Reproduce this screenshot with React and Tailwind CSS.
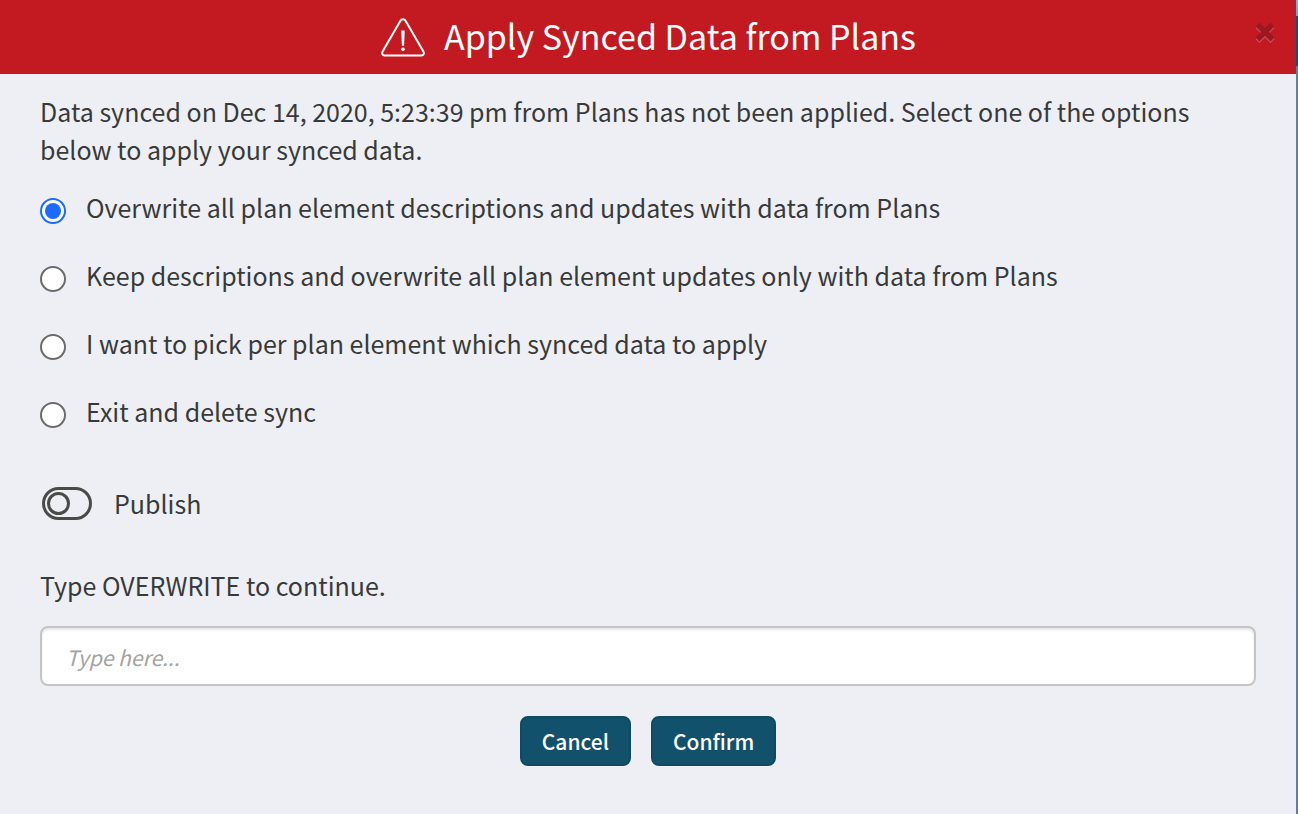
import { useState } from "react";

const OPTIONS = [
    { id: "overwrite-all", label: "Overwrite all plan element descriptions and updates with data from Plans" },
    { id: "overwrite-updates", label: "Keep descriptions and overwrite all plan element updates only with data from Plans" },
    { id: "pick", label: "I want to pick per plan element which synced data to apply" },
    { id: "exit", label: "Exit and delete sync" },
];

const WarningIcon = () => (
    <svg width="46" height="44" viewBox="0 -4 46 44" fill="none" stroke="white" strokeWidth="2" aria-hidden="true">
        <path d="M20.3 3 2.6 33.6C1.4 35.8 2.5 37.4 4.6 37.4h36.8c2.1 0 3.2-1.6 2-3.8L25.7 3c-1.3-2.3-4.1-2.3-5.4 0Z" />
        <path d="M21.3 12.5h3.4l-.6 15.2h-2.2Z" fill="white" stroke="none" />
        <circle cx="23" cy="31.2" r="1.8" fill="white" stroke="none" />
    </svg>
);

const CloseIcon = () => (
    <svg width="20" height="22" viewBox="0 0 20 22" fill="none" strokeWidth="5.5" aria-hidden="true">
        <path d="m2.5 4 15 15m0-15-15 15" stroke="#d2505a" />
        <path d="m2.5 2.5 15 15m0-15-15 15" stroke="#9c1820" />
    </svg>
);

const App = () => {
    const [option, setOption] = useState("overwrite-all");
    const [publish, setPublish] = useState(false);
    const [text, setText] = useState("");

    return (
        <div className="flex min-h-screen bg-[#eeeff5] font-['Noto_Sans_CJK_SC','Open_Sans',sans-serif] text-[25px] leading-[38px] text-[#383a3a]">
            <main className="min-w-0 flex-1">
                <header className="grid h-[74px] grid-cols-[1fr_auto_1fr] items-center bg-[#c31a22] pb-0.5 text-white">
                    <h1 className="col-start-2 flex items-center gap-[18px] text-[34px]">
                        <WarningIcon />
                        Apply Synced Data from Plans
                    </h1>
                    <button type="button" aria-label="Close" className="mr-[21px] mb-1.5 cursor-pointer justify-self-end">
                        <CloseIcon />
                    </button>
                </header>

                <form className="px-10 pt-[18px] pb-12" onSubmit={(e) => e.preventDefault()}>
                    <p>
                        Data synced on Dec 14, 2020, 5:23:39 pm from Plans has not been applied. Select one of the options
                        below to apply your synced data.
                    </p>

                    <div className="mt-5 flex flex-col gap-[30px]">
                        {OPTIONS.map((o) => (
                            <label key={o.id} className="flex items-center gap-5">
                                <input
                                    type="radio"
                                    name="option"
                                    value={o.id}
                                    checked={option === o.id}
                                    onChange={() => setOption(o.id)}
                                    className="mt-2 grid size-[26px] shrink-0 appearance-none place-items-center rounded-full border-2 border-[#6b6b6b] bg-white before:size-4 before:rounded-full checked:border-[#1b6bff] checked:before:bg-[#1b6bff]"
                                />
                                {o.label}
                            </label>
                        ))}
                    </div>

                    <label className="mt-[54px] flex w-fit items-center gap-[22px]">
                        <input
                            type="checkbox"
                            role="switch"
                            checked={publish}
                            onChange={(e) => setPublish(e.target.checked)}
                            className="ml-0.5 flex h-[33px] w-[50px] appearance-none items-center rounded-full border-3 border-[#4a4a48] px-[2px] before:size-[23px] before:rounded-full before:border-3 before:border-[#4a4a48] checked:justify-end"
                        />
                        Publish
                    </label>

                    <label htmlFor="confirm-text" className="mt-11 block">Type OVERWRITE to continue.</label>
                    <input
                        id="confirm-text"
                        type="text"
                        placeholder="Type here..."
                        value={text}
                        onChange={(e) => setText(e.target.value)}
                        className="mt-[22px] block h-[60px] w-full rounded-lg border-2 border-[#c4c4c4] bg-white px-6 pt-0.5 text-[21px] shadow-[inset_0_2px_3px_rgba(0,0,0,0.1)] placeholder:text-[#a3a3a3] placeholder:italic"
                    />

                    <div className="mt-[30px] flex justify-center gap-5 text-[21px] leading-[46px] font-medium text-white">
                        <button type="button" className="cursor-pointer rounded-lg border-2 border-[#104a61] bg-[#12516b] px-5">Cancel</button>
                        <button type="submit" className="cursor-pointer rounded-lg border-2 border-[#104a61] bg-[#12516b] px-5">Confirm</button>
                    </div>
                </form>
            </main>
            <div className="w-0.5 bg-[linear-gradient(#8faed6_0,#7f9cc0_16px,#1f4a69_16px,#1f4a69_66px,#64809c_66px,#5f7f9f)]" />
        </div>
    );
};

export default App;
